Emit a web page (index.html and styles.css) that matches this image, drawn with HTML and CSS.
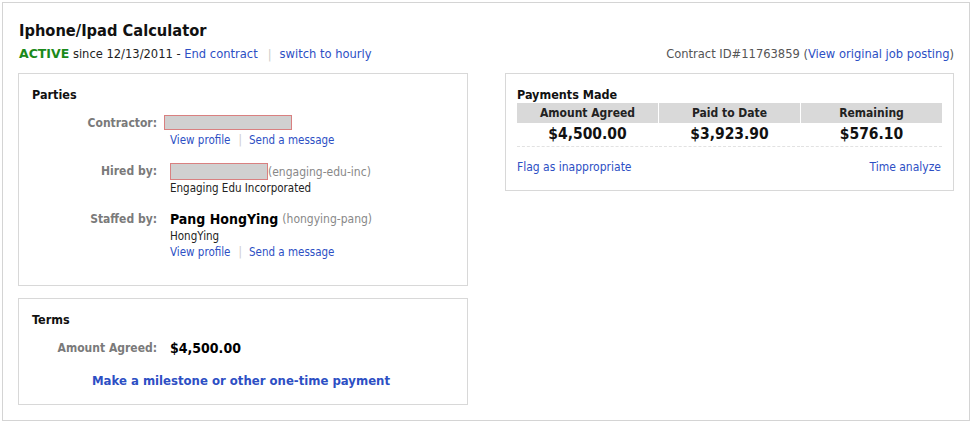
FILE: index.html
```html
<!DOCTYPE html>
<html>
<head>
<meta charset="utf-8">
<link rel="stylesheet" href="styles.css">
</head>
<body>
<div class="frame">
  <h1 class="title">Iphone/Ipad Calculator</h1>
  <div class="statusbar">
    <div class="status">
      <span class="active">ACTIVE</span> since 12/13/2011 - <a class="link">End contract</a><span class="sep">|</span><a class="link">switch to hourly</a>
    </div>
    <div class="contract-id">Contract ID#11763859 (<a class="link">View original job posting</a>)</div>
  </div>
  <div class="columns">
    <div class="left">
      <section class="box parties">
        <h2 class="box-title">Parties</h2>
        <div class="row">
          <div class="label">Contractor:</div>
          <div class="value">
            <div class="redact redact-contractor"></div>
            <div class="links"><a class="link">View profile</a><span class="sep">|</span><a class="link">Send a message</a></div>
          </div>
        </div>
        <div class="row row-hired">
          <div class="label">Hired by:</div>
          <div class="value">
            <div class="line"><span class="redact redact-hired"></span><span class="handle">(engaging-edu-inc)</span></div>
            <div class="plain">Engaging Edu Incorporated</div>
          </div>
        </div>
        <div class="row row-staffed">
          <div class="label">Staffed by:</div>
          <div class="value">
            <div class="line"><span class="name">Pang HongYing</span> <span class="handle">(hongying-pang)</span></div>
            <div class="plain">HongYing</div>
            <div class="links"><a class="link">View profile</a><span class="sep">|</span><a class="link">Send a message</a></div>
          </div>
        </div>
      </section>
      <section class="box terms">
        <h2 class="box-title">Terms</h2>
        <div class="row">
          <div class="label">Amount Agreed:</div>
          <div class="value amount">$4,500.00</div>
        </div>
        <div class="cta"><a class="link strong">Make a milestone or other one-time payment</a></div>
      </section>
    </div>
    <div class="right">
      <section class="box payments">
        <h2 class="box-title">Payments Made</h2>
        <div class="pay-table">
          <div class="th">Amount Agreed</div>
          <div class="th">Paid to Date</div>
          <div class="th">Remaining</div>
          <div class="td">$4,500.00</div>
          <div class="td">$3,923.90</div>
          <div class="td">$576.10</div>
        </div>
        <div class="pay-links"><a class="link">Flag as inappropriate</a><a class="link">Time analyze</a></div>
      </section>
    </div>
  </div>
</div>
</body>
</html>
```
FILE: styles.css
```css
* { box-sizing: border-box; }
html, body { margin: 0; padding: 0; background: #fff; }
body {
  font-family: "DejaVu Sans Condensed", "DejaVu Sans", sans-serif;
  font-size: 12px;
  color: #222;
}
.frame {
  margin: 2px;
  width: 968px;
  height: 419px;
  border: 1px solid #d4d4d4;
  padding: 16px 15px 0 15px;
}
.title {
  margin: 0 0 0 1px;
  font-size: 16.3px;
  font-weight: bold;
  color: #111;
  line-height: 24px;
}
.statusbar {
  display: flex;
  justify-content: space-between;
  align-items: center;
  line-height: 16px;
  margin-top: 3px;
  padding-left: 1px;
  font-size: 12.8px;
}
.active { color: #1b8a1b; font-weight: bold; font-family: "DejaVu Sans", sans-serif; font-size: 12.5px; }
.link { color: #2d4fc4; text-decoration: none; cursor: pointer; }
.sep { color: #ccc; margin: 0 7px 0 8px; }
.statusbar .sep { margin: 0 8px 0 10px; }
.contract-id { color: #555; }
.columns {
  display: flex;
  gap: 37px;
  margin-top: 11px;
}
.left { width: 450px; display: flex; flex-direction: column; gap: 12px; }
.right { width: 449px; }
.box {
  border: 1px solid #d8d8d8;
  padding: 13px 12px 0 13px;
}
.box-title {
  margin: 0;
  font-size: 12.5px;
  font-weight: bold;
  color: #111;
  line-height: 16px;
}
.parties { height: 213px; }
.terms { height: 107px; padding-top: 13px; }
.row {
  display: grid;
  grid-template-columns: 125px 1fr;
  column-gap: 13px;
  margin-top: 14px;
}
.parties .row:first-of-type { margin-top: 12px; }
.parties .row-hired { margin-top: 15px; }
.parties .row-staffed { margin-top: 15px; }
.label {
  text-align: right;
  font-weight: bold;
  color: #7a7a7a;
  line-height: 16px;
}
.value { line-height: 16px; }
.redact {
  display: inline-block;
  background: #d0d0d0;
  border: 1px solid #d98080;
  vertical-align: middle;
}
.redact-contractor { width: 128px; height: 15px; margin-left: -6px; display: block; margin-top: 0; }
.redact-hired { width: 98px; height: 17px; }
.links { margin-top: 2px; font-size: 11.5px; }
.row-staffed .links { margin-top: 0; }
.line { display: flex; align-items: center; }
.handle { color: #888; }
.plain { font-size: 11.5px; color: #222; line-height: 16px; }
.row-staffed .plain { margin-top: 1px; }
.name { font-weight: bold; font-size: 14px; color: #000; margin-right: 4px; }
.terms .row { margin-top: 12px; }
.amount { font-weight: bold; font-size: 14px; color: #000; }
.cta { text-align: center; margin-top: 17px; padding-right: 5px; }
.strong { font-weight: bold; font-size: 13px; }
.payments { height: 118px; padding: 13px 12px 0 11px; }
.pay-table {
  display: grid;
  grid-template-columns: 141px 141px 141px;
  column-gap: 1px;
  margin-top: 0;
}
.th {
  background: #d9d9d9;
  text-align: center;
  font-weight: bold;
  color: #222;
  line-height: 20px;
}
.td {
  text-align: center;
  font-weight: bold;
  font-size: 15.5px;
  color: #111;
  line-height: 23px;
  border-bottom: 1px dashed #e2e2e2;
}
.pay-links {
  display: flex;
  justify-content: space-between;
  margin-top: 13px;
}
```
